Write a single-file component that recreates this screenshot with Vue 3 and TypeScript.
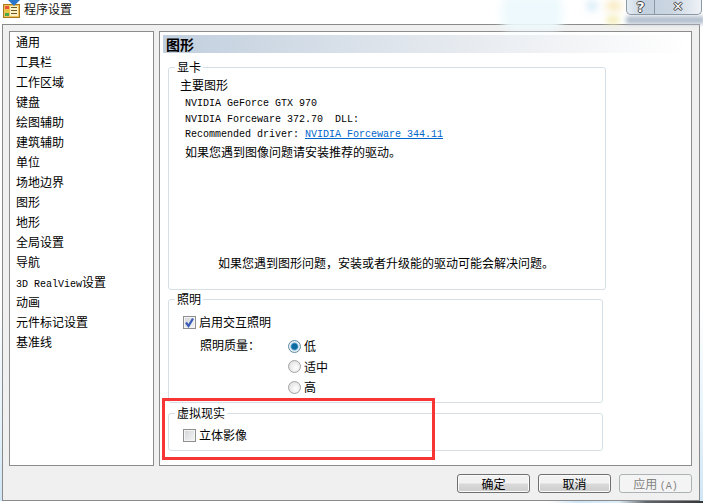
<script setup lang="ts">
const navItems: { cjk: string; latin?: string }[] = [
  { cjk: '通用' }, { cjk: '工具栏' }, { cjk: '工作区域' }, { cjk: '键盘' }, { cjk: '绘图辅助' },
  { cjk: '建筑辅助' }, { cjk: '单位' }, { cjk: '场地边界' }, { cjk: '图形' }, { cjk: '地形' },
  { cjk: '全局设置' }, { cjk: '导航' }, { latin: '3D RealView', cjk: '设置' }, { cjk: '动画' },
  { cjk: '元件标记设置' }, { cjk: '基准线' },
]
const gpuLines = ['NVIDIA GeForce GTX 970', 'NVIDIA Forceware 372.70  DLL:']
const qualities = [
  { label: '低', on: true },
  { label: '适中', on: false },
  { label: '高', on: false },
]
</script>

<template>
  <div class="window">
    <header class="titlebar">
      <svg class="appicon" width="18" height="18" viewBox="0 0 18 18">
        <rect x="0.5" y="4.5" width="16" height="13" fill="#f0c35a" stroke="#a9781c" />
        <rect x="2" y="6" width="4" height="3" fill="#e8543a" />
        <rect x="2" y="9.5" width="4" height="3" fill="#e8c83a" />
        <rect x="2" y="13" width="4" height="3" fill="#49a84a" />
        <rect x="7" y="6" width="8" height="10" fill="#fbf0c8" />
        <rect x="8" y="7" width="6" height="1" fill="#6a5a20" />
        <rect x="8" y="10" width="6" height="1" fill="#6a5a20" />
        <rect x="8" y="13" width="6" height="1" fill="#6a5a20" />
        <path d="M5 0h12l-6 6z" fill="#2a76cc" />
      </svg>
      <span class="title">程序设置</span>
      <div class="blob b1"></div>
      <div class="blob b2"></div>
      <div class="blob b3"></div>
      <div class="blob b4"></div>
      <div class="blob band"></div>
      <div class="controls">
        <span class="ctl help">?</span>
        <span class="ctl close">✕</span>
      </div>
    </header>

    <div class="client">
      <div class="main">
        <nav class="list">
          <div v-for="n in navItems" :key="n.cjk" class="item">
            <span v-if="n.latin" class="latin">{{ n.latin }}</span>{{ n.cjk }}
          </div>
        </nav>
        <section class="panel">
          <h2 class="head">图形</h2>

          <fieldset class="group gpu">
            <legend>显卡</legend>
            <div class="body">
              <div class="sub">主要图形</div>
              <div v-for="l in gpuLines" :key="l" class="mono">{{ l }}</div>
              <div class="mono">Recommended driver: <a class="link">NVIDIA Forceware 344.11</a></div>
              <div class="hint">如果您遇到图像问题请安装推荐的驱动。</div>
              <div class="note">如果您遇到图形问题，安装或者升级能的驱动可能会解决问题。</div>
            </div>
          </fieldset>

          <fieldset class="group light">
            <legend>照明</legend>
            <div class="body">
              <label class="check first"><span class="box on"><svg width="11" height="11" viewBox="0 0 11 11"><path d="M2 5.5L4.5 9 9 1.5" fill="none" stroke="#3a5cb8" stroke-width="2.2" /></svg></span>启用交互照明</label>
              <div class="quality">
                <span class="qlabel">照明质量：</span>
                <div class="radios">
                  <div v-for="q in qualities" :key="q.label" class="radio">
                    <span class="dot" :class="{ on: q.on }"></span>{{ q.label }}
                  </div>
                </div>
              </div>
            </div>
          </fieldset>

          <fieldset class="group vr">
            <legend>虚拟现实</legend>
            <div class="body">
              <label class="check second"><span class="box"></span>立体影像</label>
            </div>
          </fieldset>
        </section>
      </div>
      <footer class="actions">
        <button class="btn">确定</button>
        <button class="btn">取消</button>
        <button class="btn off">应用 <span class="acc">(A)</span></button>
      </footer>
    </div>

    <div class="redbox"></div>
    <div class="shadow"></div>
  </div>
</template>

<style>
html, body { margin: 0; background: #fff; }
</style>

<style scoped>
.window {
  position: relative;
  width: 703px;
  height: 503px;
  overflow: hidden;
  box-sizing: border-box;
  padding: 0 3px 2px 2px;
  display: flex;
  flex-direction: column;
  color: #000;
  font: 12px/16px "Noto Sans CJK SC", sans-serif;
  background: linear-gradient(#fff 0 60%, #e4f2fb 85%, #cfe6f6 100%);
}
.titlebar {
  height: 24px;
  flex: none;
  display: flex;
  align-items: center;
  position: relative;
  background: #fff;
  margin-right: -3px;
}
.appicon { margin: -6px 0 0 1px; position: relative; }
.title { margin: -6px 0 0 3px; font-size: 12px; color: #111; }
.blob { position: absolute; border-radius: 50%; filter: blur(4px); }
.b1 { left: 500px; top: -4px; width: 60px; height: 34px; background: #edf9fd; border-radius: 8px; }
.b2 { left: 586px; top: 2px; width: 8px; height: 8px; background: #b4dcf2; }
.b3 { left: 604px; top: 2px; width: 16px; height: 8px; background: #f6dfa2; }
.b4 { left: 604px; top: 16px; width: 14px; height: 8px; background: #f3ecb0; filter: blur(3px); }
.band {
  left: 624px;
  top: 16px;
  width: 79px;
  height: 8px;
  border-radius: 2px;
  background: #b2bfcd;
  filter: blur(2px);
}
.controls {
  position: absolute;
  top: -1px;
  left: 624px;
  display: flex;
  width: 76px;
  height: 16px;
  box-sizing: border-box;
  border: 1px solid #8b98a6;
  border-top: 0;
  border-radius: 0 0 5px 5px;
  background: linear-gradient(90deg, #e5ecf3, #c3d0de 25%, #cbd6e2 60%, #eef2f6);
}
.ctl {
  display: flex;
  align-items: center;
  justify-content: center;
  color: #f8f8f8;
  font: 900 14px/14px "DejaVu Sans", sans-serif;
  text-shadow: 1px 0 0 #444, -1px 0 0 #444, 0 1px 0 #444, 0 -1px 0 #444;
}
.help { width: 27px; border-right: 1px solid #8b98a6; }
.close { flex: 1; font-size: 13px; }

.client {
  flex: 1;
  min-height: 0;
  display: flex;
  flex-direction: column;
  background: #f0f0f0;
  border: 1px solid #8a8a8a;
  padding: 6px 7px 0 6px;
}
.main {
  height: 435px;
  flex: none;
  display: flex;
  gap: 5px;
}
.list {
  width: 145px;
  flex: none;
  box-sizing: border-box;
  background: #fff;
  border: 1px solid #8c8c8c;
  padding: 0 0 0 6px;
}
.item { height: 20px; line-height: 20px; font-size: 12px; white-space: nowrap; }
.latin { font: 10px/20px "Liberation Mono", monospace; }
.panel {
  flex: 1;
  min-width: 0;
  box-sizing: border-box;
  background: #fff;
  border: 1px solid #8c8c8c;
  padding: 3px 4px 0 3px;
}
.head {
  margin: 0;
  height: 18px;
  font: 700 14px/18px "Noto Sans CJK SC", sans-serif;
  padding-left: 3px;
  background: linear-gradient(90deg, #c1cfde 0%, #dfe5ec 45%, #f4f5f7 80%, #fff 100%);
}
.group {
  margin: 0 0 0 5px;
  padding: 0;
  box-sizing: border-box;
  border: 1px solid #d5dfe5;
  border-radius: 3px;
  min-inline-size: 0;
}
.group legend {
  padding: 0 2px;
  margin-left: 6px;
  font-size: 12px;
  line-height: 16px;
}
.gpu { width: 438px; height: 231px; margin-top: 6px; }
.light { width: 435px; height: 112px; margin-top: 1px; }
.vr { width: 435px; height: 46px; margin-top: 2px; }
.gpu .body { padding: 2px 0 0 11px; }
.light .body, .vr .body { padding: 2px 0 0 14px; }
.sub { line-height: 16px; }
.mono { font: 10px/15.5px "Liberation Mono", monospace; padding-left: 5px; white-space: pre; }
.sub + .mono { margin-top: 3px; }
.link { color: #0066cc; text-decoration: underline; }
.hint { padding-left: 5px; margin-top: 1px; line-height: 16px; }
.note { margin: 95px 0 0 38px; white-space: nowrap; }
.check { display: flex; align-items: center; gap: 3px; height: 16px; line-height: 16px; }
.check.first { margin-top: 5px; }
.check.second { margin-top: 4px; }
.box {
  width: 11px;
  height: 11px;
  flex: none;
  border: 1px solid #8e8f8f;
  background: linear-gradient(135deg, #d2d4d6, #f6f6f6);
  box-shadow: inset 0 0 0 1px #f4f4f4;
  display: flex;
  align-items: center;
  justify-content: center;
}
.quality { display: flex; margin: 7px 0 0 17px; }
.qlabel { width: 88px; }
.radios { display: flex; flex-direction: column; gap: 4.5px; margin-top: 1px; }
.radio { display: flex; align-items: center; gap: 3px; height: 16px; }
.dot {
  width: 11px;
  height: 11px;
  border-radius: 50%;
  border: 1px solid #a2a2a2;
  background: radial-gradient(circle at 60% 60%, #fff, #d8d8d8);
}
.dot.on { background: radial-gradient(circle, #0d6aa0 0 2.6px, #3f93c4 3.2px, #e6eff5 4.4px); border-color: #5f8aa3; }

.actions {
  flex: 1;
  display: flex;
  justify-content: flex-end;
  gap: 8px;
  padding-top: 8px;
}
.btn {
  width: 73px;
  height: 19px;
  padding: 0;
  box-sizing: border-box;
  border: 1px solid #707070;
  border-radius: 3px;
  background: linear-gradient(#f2f2f2 0 45%, #d9d9d9 55%, #cdcdcd);
  box-shadow: inset 0 0 0 1px #fbfbfb;
  color: #000;
  font: 12px/15px "Noto Sans CJK SC", sans-serif;
}
.btn.off { border-color: #adb2b5; background: #f4f4f4; color: #838383; box-shadow: none; }
.acc { font: 10px "Liberation Mono", monospace; }
.redbox {
  position: absolute;
  left: 162px;
  top: 398px;
  width: 273px;
  height: 62px;
  box-sizing: border-box;
  border: 3px solid #f73535;
  pointer-events: none;
}
.shadow {
  position: absolute;
  left: 0;
  right: 0;
  bottom: 0;
  height: 2px;
  background: linear-gradient(90deg, #fff 0 78%, #cfe6f6 82%, #dfeef8 88%, #5f666c 92%, #33383c 100%);
}
</style>
